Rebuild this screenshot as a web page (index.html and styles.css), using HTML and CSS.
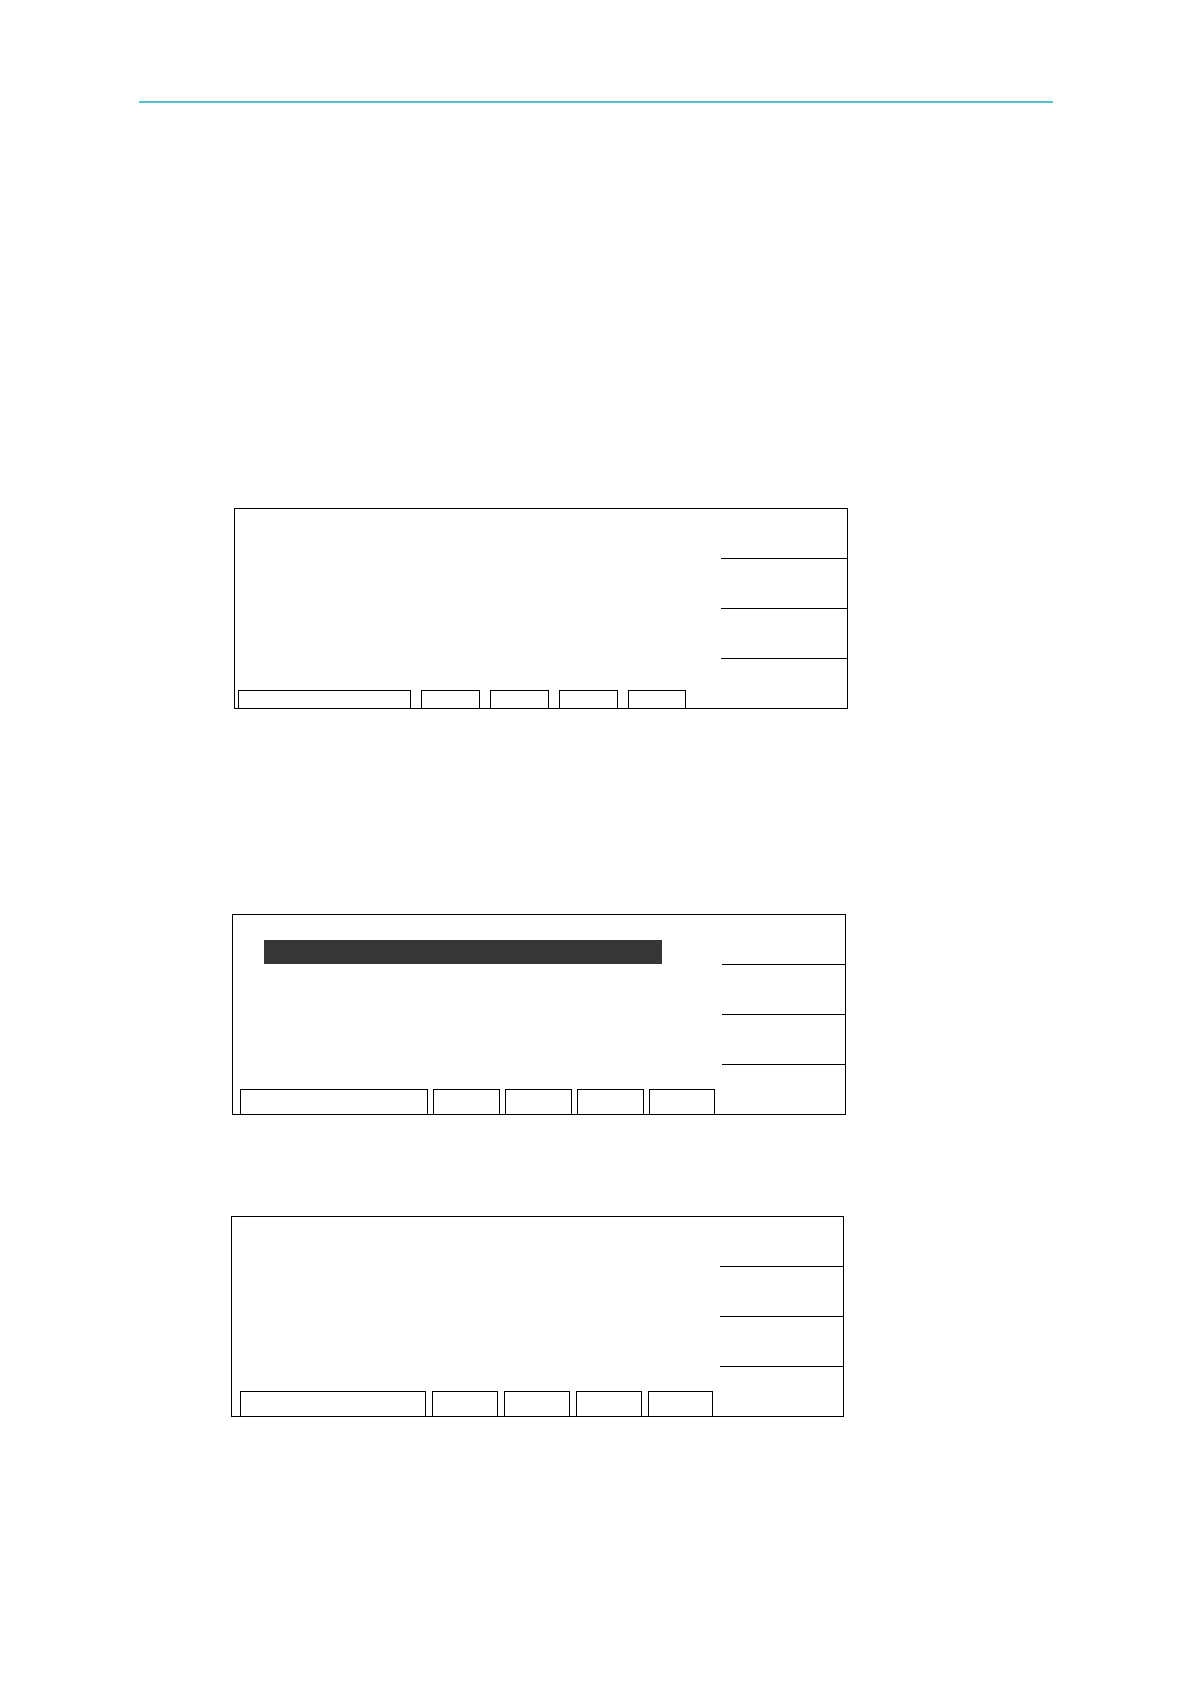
FILE: index.html
```html
<!DOCTYPE html>
<html lang="en">
<head>
<meta charset="utf-8">
<title>Screens</title>
<link rel="stylesheet" href="styles.css">
</head>
<body>
<div class="page">
  <div class="rule"></div>

  <div class="screen screen-1">
    <div class="main">
      <div class="keys">
        <div class="key key-wide"></div>
        <div class="key"></div>
        <div class="key"></div>
        <div class="key"></div>
        <div class="key key-last"></div>
      </div>
    </div>
    <div class="side">
      <div class="cell"></div>
      <div class="cell"></div>
      <div class="cell"></div>
      <div class="cell"></div>
    </div>
  </div>

  <div class="screen screen-2">
    <div class="main">
      <div class="highlight"></div>
      <div class="keys">
        <div class="key key-wide"></div>
        <div class="key"></div>
        <div class="key"></div>
        <div class="key"></div>
        <div class="key key-last"></div>
      </div>
    </div>
    <div class="side">
      <div class="cell"></div>
      <div class="cell"></div>
      <div class="cell"></div>
      <div class="cell"></div>
    </div>
  </div>

  <div class="screen screen-3">
    <div class="main">
      <div class="keys">
        <div class="key key-wide"></div>
        <div class="key"></div>
        <div class="key"></div>
        <div class="key"></div>
        <div class="key key-last"></div>
      </div>
    </div>
    <div class="side">
      <div class="cell"></div>
      <div class="cell"></div>
      <div class="cell"></div>
      <div class="cell"></div>
    </div>
  </div>
</div>
</body>
</html>
```

FILE: styles.css
```css
html, body {
  margin: 0;
  padding: 0;
  background: #ffffff;
  font-family: "Liberation Sans", Arial, sans-serif;
}

.page {
  width: 1191px;
  min-height: 1684px;
  padding-top: 101px;
  box-sizing: border-box;
}

.rule {
  margin-left: 139px;
  width: 914px;
  height: 2px;
  background: #4fc4cf;
}

.screen {
  box-sizing: border-box;
  height: 201px;
  border: 1px solid #000;
  display: flex;
}

.screen-1 {
  margin: 405px 0 0 234px;
  width: 614px;
}

.screen-2 {
  margin: 205px 0 0 232px;
  width: 614px;
}

.screen-3 {
  margin: 101px 0 0 231px;
  width: 613px;
}

.main {
  flex: 1;
  display: flex;
  flex-direction: column;
  justify-content: flex-end;
  position: relative;
}

.side {
  display: flex;
  flex-direction: column;
}

.screen-1 .side { width: 126px; }
.screen-2 .side { width: 123px; }
.screen-3 .side { width: 123px; }

.cell {
  box-sizing: border-box;
  height: 50px;
  border-bottom: 1px solid #000;
}

.cell:last-child {
  height: 49px;
  border-bottom: none;
}

.keys {
  display: flex;
}

.key {
  box-sizing: border-box;
  border: 1px solid #000;
  border-bottom: none;
}

/* screen 1 soft keys */
.screen-1 .keys { padding-left: 3px; gap: 10px; }
.screen-1 .key { height: 18px; width: 59px; }
.screen-1 .key-wide { width: 173px; }
.screen-1 .key-last { width: 58px; }

/* screen 2 soft keys */
.screen-2 .keys { padding-left: 7px; gap: 5px; }
.screen-2 .key { height: 25px; width: 67px; }
.screen-2 .key-wide { width: 188px; }
.screen-2 .key-last { width: 66px; }

/* screen 3 soft keys */
.screen-3 .keys { padding-left: 8px; gap: 6px; }
.screen-3 .key { height: 25px; width: 66px; }
.screen-3 .key-wide { width: 186px; }
.screen-3 .key-last { width: 65px; }

.highlight {
  position: absolute;
  left: 31px;
  top: 25px;
  width: 398px;
  height: 24px;
  background: #363636;
}
```
